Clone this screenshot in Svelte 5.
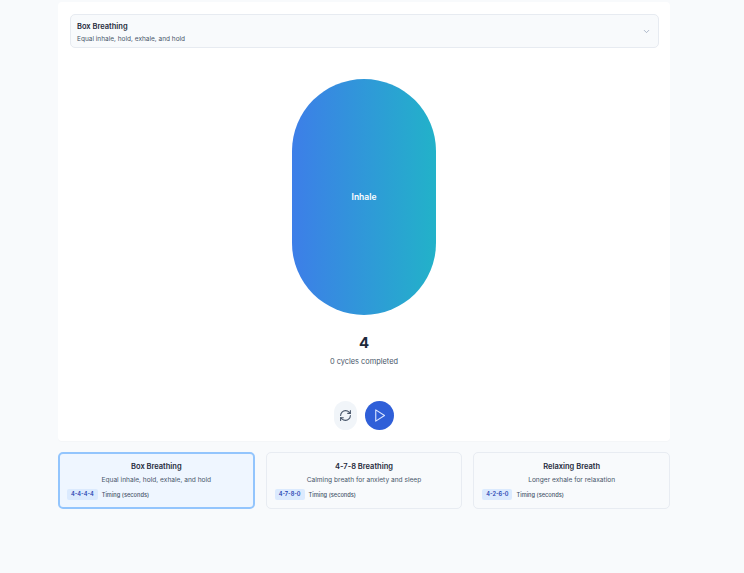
<script>
  const patterns = [
    { name: 'Box Breathing', description: 'Equal inhale, hold, exhale, and hold', timing: '4-4-4-4' },
    { name: '4-7-8 Breathing', description: 'Calming breath for anxiety and sleep', timing: '4-7-8-0' },
    { name: 'Relaxing Breath', description: 'Longer exhale for relaxation', timing: '4-2-6-0' }
  ];

  let selected = $state(0);
  let cycles = $state(0);
  let running = $state(false);
</script>

<main class="page">
  <section class="panel">
    <button class="select">
      <span class="select-text">
        <span class="select-name">{patterns[selected].name}</span>
        <span class="select-desc">{patterns[selected].description}</span>
      </span>
      <svg class="chevron" width="9" height="9" viewBox="0 0 24 24" fill="none" stroke="currentColor" stroke-width="2" stroke-linecap="round" stroke-linejoin="round">
        <path d="m6 9 6 6 6-6" />
      </svg>
    </button>

    <div class="stage">
      <div class="breath">Inhale</div>
    </div>

    <div class="count">4</div>
    <div class="cycles">{cycles} cycles completed</div>

    <div class="controls">
      <button class="reset" aria-label="Reset" onclick={() => (cycles = 0)}>
        <svg width="13" height="13" viewBox="0 0 24 24" fill="none" stroke="currentColor" stroke-width="2" stroke-linecap="round" stroke-linejoin="round">
          <path d="M3 12a9 9 0 0 1 9-9 9.75 9.75 0 0 1 6.74 2.74L21 8" />
          <path d="M21 3v5h-5" />
          <path d="M21 12a9 9 0 0 1-9 9 9.75 9.75 0 0 1-6.74-2.74L3 16" />
          <path d="M8 16H3v5" />
        </svg>
      </button>
      <button class="play" aria-label="Start" onclick={() => (running = !running)}>
        <svg width="15" height="15" viewBox="0 0 24 24" fill="none" stroke="currentColor" stroke-width="1.8" stroke-linecap="round" stroke-linejoin="round">
          <polygon points="6 3 20 12 6 21 6 3" />
        </svg>
      </button>
    </div>
  </section>

  <section class="cards">
    {#each patterns as pattern, i}
      <button class="card" class:active={selected === i} onclick={() => (selected = i)}>
        <span class="card-name">{pattern.name}</span>
        <span class="card-desc">{pattern.description}</span>
        <span class="card-meta">
          <span class="badge">{pattern.timing}</span>
          <span class="meta-label">Timing (seconds)</span>
        </span>
      </button>
    {/each}
  </section>
</main>

<style>
  :global(body) {
    background: #f8fafc;
    font-family: Inter, 'Noto Sans', sans-serif;
  }

  button {
    font-family: inherit;
    cursor: pointer;
  }

  .page {
    width: 612px;
    height: 573px;
    margin: 0 auto 0 58px;
    padding-top: 2px;
    box-sizing: border-box;
  }

  .panel {
    height: 439px;
    box-sizing: border-box;
    padding: 12px;
    background: #fff;
    border-radius: 4px;
    box-shadow: 0 1px 1px rgba(15, 23, 42, 0.02);
    display: flex;
    flex-direction: column;
    align-items: center;
  }

  .select {
    width: calc(100% + 1px);
    margin-right: -1px;
    height: 34px;
    flex: none;
    box-sizing: border-box;
    padding: 3px 7px 0 6px;
    display: flex;
    align-items: center;
    justify-content: space-between;
    background: #f8fafc;
    border: 1px solid #e7ebf1;
    border-radius: 5px;
    text-align: left;
  }

  .select-text {
    display: flex;
    flex-direction: column;
    gap: 1px;
  }

  .select-name {
    font-size: 7.5px;
    line-height: 12px;
    font-weight: 600;
    color: #1e293b;
  }

  .select-desc {
    font-size: 6.5px;
    line-height: 11px;
    color: #475569;
  }

  .chevron {
    color: #94a3b8;
    margin-top: -3px;
  }

  .stage {
    margin-top: 31px;
    display: flex;
    justify-content: center;
  }

  .breath {
    width: 144px;
    height: 236px;
    border-radius: 72px;
    display: flex;
    align-items: center;
    justify-content: center;
    background: linear-gradient(to right, #3d7ee8, #22b2c9);
    color: #fff;
    font-size: 8.5px;
    font-weight: 600;
  }

  .count {
    margin-top: 18px;
    font-size: 15px;
    line-height: 19px;
    font-weight: 700;
    color: #1e293b;
  }

  .cycles {
    margin-top: 4px;
    font-size: 7.4px;
    line-height: 12px;
    color: #475569;
  }

  .controls {
    margin-top: 33px;
    display: flex;
    align-items: center;
    gap: 8px;
  }

  .reset,
  .play {
    height: 29px;
    padding: 0;
    display: flex;
    align-items: center;
    justify-content: center;
    border: none;
    border-radius: 50%;
  }

  .reset {
    width: 23px;
    border-radius: 12px;
    background: #f1f5f9;
    color: #475569;
  }

  .play {
    width: 29px;
    background: #2f5fd8;
    color: #dbe6ff;
  }

  .cards {
    margin-top: 11px;
    display: grid;
    grid-template-columns: repeat(3, 1fr);
    gap: 11px;
  }

  .card {
    height: 57px;
    box-sizing: border-box;
    padding: 7px 8px 0;
    display: flex;
    flex-direction: column;
    align-items: center;
    background: #f8fafc;
    border: 1px solid #e8ecf2;
    border-radius: 5px;
  }

  .card.active {
    background: #eff6ff;
    border: 2px solid #93c5fd;
    padding: 6px 7px 0;
  }

  .card-name {
    font-size: 7.5px;
    line-height: 13px;
    font-weight: 600;
    color: #1e293b;
  }

  .card-desc {
    margin-top: 1px;
    font-size: 6.6px;
    line-height: 12px;
    color: #475569;
  }

  .card-meta {
    margin-top: 3px;
    align-self: stretch;
    display: flex;
    align-items: center;
    gap: 4px;
  }

  .badge {
    padding: 0 4px;
    height: 11px;
    line-height: 11px;
    border-radius: 2px;
    background: #dbeafe;
    color: #1e40af;
    font-size: 5.6px;
    font-weight: 600;
  }

  .meta-label {
    font-size: 5.7px;
    font-weight: 500;
    color: #475569;
  }
</style>
